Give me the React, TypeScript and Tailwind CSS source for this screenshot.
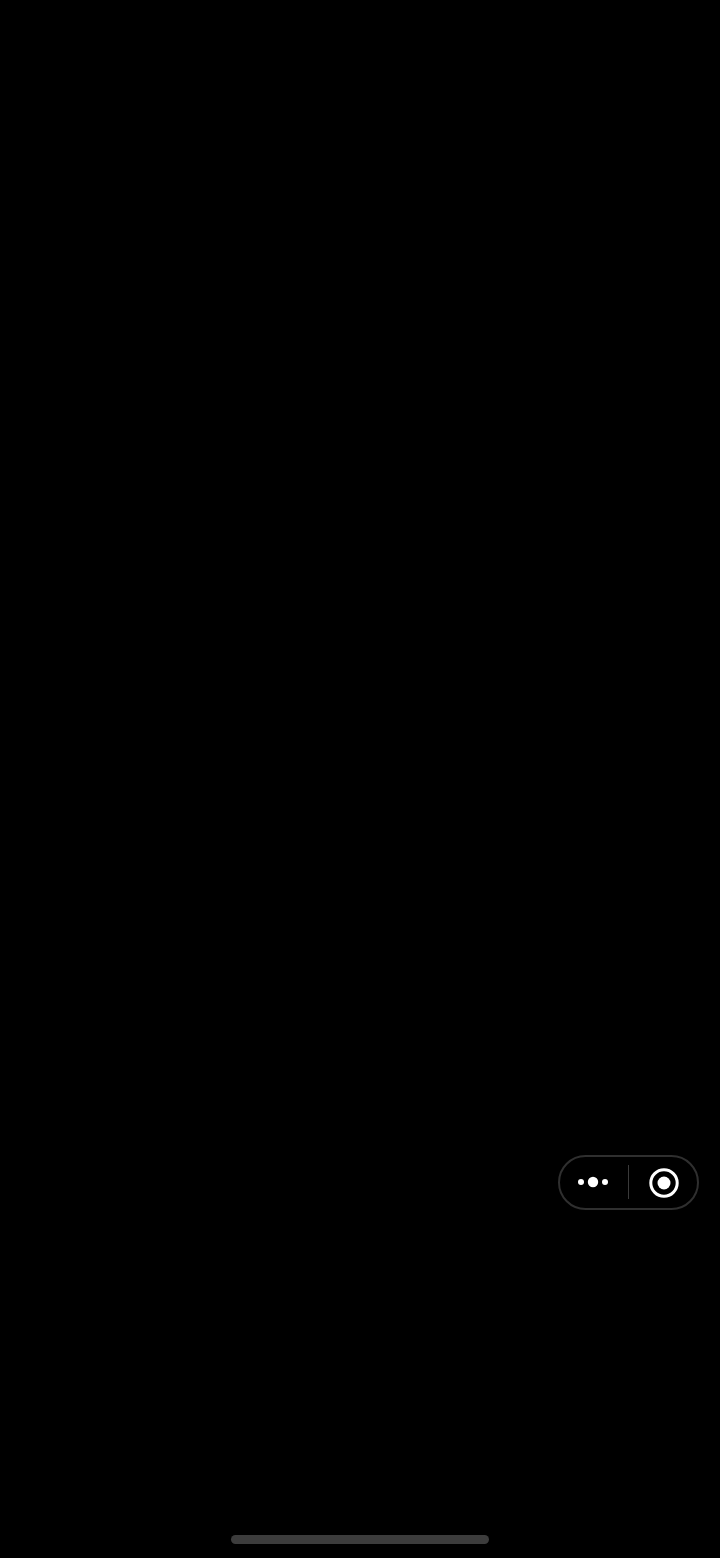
export default function App() {
  return (
    <div className="flex h-[1558px] w-[720px] flex-col bg-black pt-[1155px]">
      <div className="mr-[21px] flex h-[55px] w-[141px] items-center self-end rounded-full border-2 border-[#2f2f2f]">
        <div className="flex h-full w-[68px] items-center justify-center pr-[2px]">
          <svg width="32" height="12" viewBox="0 0 32 12" className="mb-[1px]">
            <circle cx="4" cy="6" r="3" fill="#fff" />
            <circle cx="16" cy="6" r="5.2" fill="#fff" />
            <circle cx="28" cy="6" r="3" fill="#fff" />
          </svg>
        </div>
        <div className="mb-[1px] h-[34px] w-[1px] bg-[#3a3a3a]" />
        <div className="flex h-full flex-1 items-center justify-center pl-[2px]">
          <svg width="32" height="32" viewBox="0 0 32 32">
            <circle cx="16" cy="16" r="13.2" fill="none" stroke="#fff" strokeWidth="3" />
            <circle cx="16" cy="16" r="6.5" fill="#fff" />
          </svg>
        </div>
      </div>
      <div className="mx-auto mt-[325px] h-[9px] w-[258px] rounded-full bg-[#3c3c3c]" />
    </div>
  );
}
